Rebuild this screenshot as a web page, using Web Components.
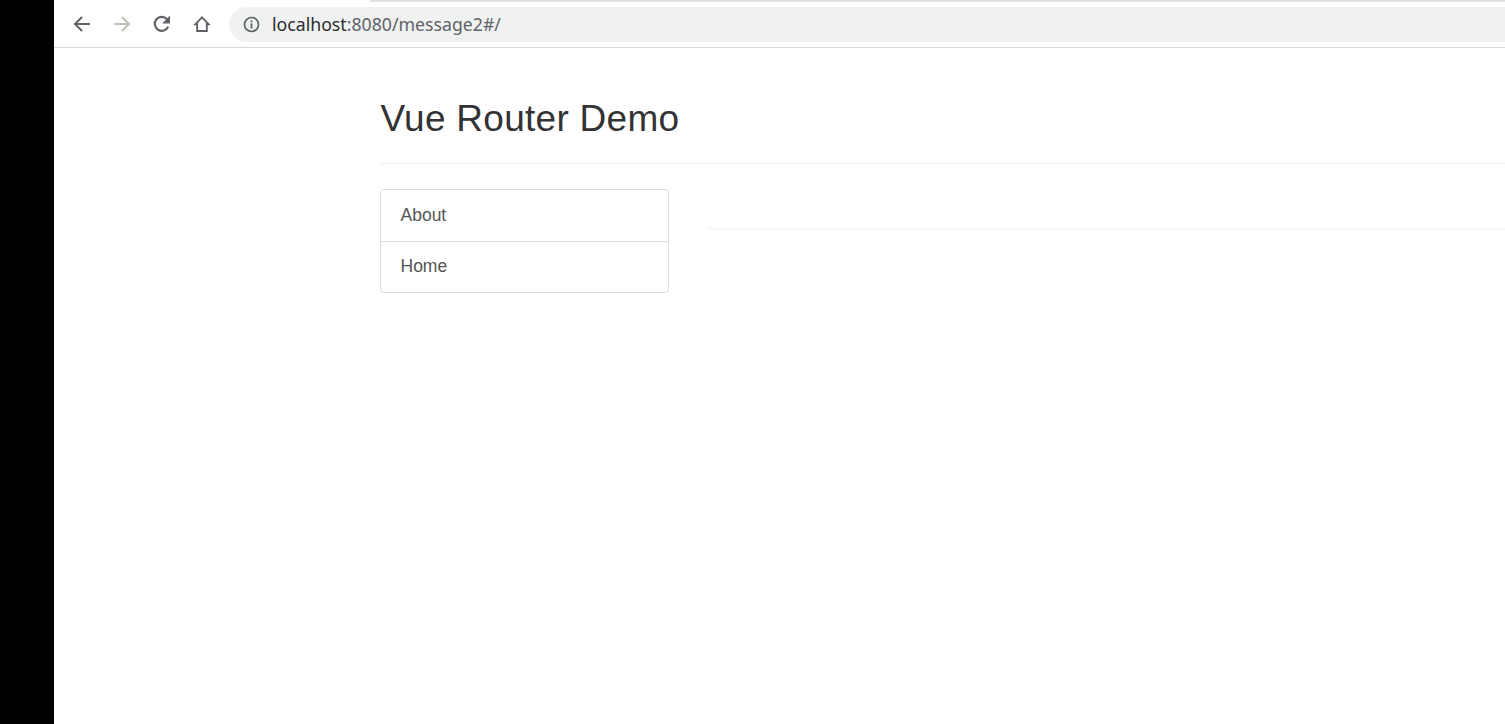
<!DOCTYPE html>
<html>
<head>
<meta charset="utf-8">
<title>Vue Router Demo</title>
<style>
  html, body { margin: 0; height: 100%; background: #000; overflow: hidden; }
  body { display: flex; font-family: "Liberation Sans", Arial, sans-serif; }
</style>
</head>
<body>
<browser-window>
  <browser-toolbar slot="chrome" url-host="localhost" url-rest=":8080/message2#/"></browser-toolbar>
  <demo-page heading="Vue Router Demo">
    <nav-list slot="nav">
      <nav-item>About</nav-item>
      <nav-item>Home</nav-item>
    </nav-list>
    <content-well slot="main"></content-well>
  </demo-page>
</browser-window>

<script>
// browser frame: toolbar on top, page under it, black strip on the left
const _windowTemplate = document.createElement('template');
_windowTemplate.innerHTML = /*html*/ `
<style>
  :host { display: flex; flex-direction: column; flex: 1; min-width: 0; margin-left: 54px; background: #fff; }
  .page { flex: 1; min-height: 0; }
</style>
<slot name="chrome"></slot>
<div class="page"><slot></slot></div>`;

class BrowserWindow extends HTMLElement {
  connectedCallback() {
    const shadowRoot = this.attachShadow({ mode: 'open' });
    shadowRoot.appendChild(_windowTemplate.content.cloneNode(true));
  }
}
customElements.define('browser-window', BrowserWindow);

const _toolbarTemplate = document.createElement('template');
_toolbarTemplate.innerHTML = /*html*/ `
<style>
  :host { display: block; font-family: "Noto Sans", "Liberation Sans", sans-serif; }
  .tabs { height: 2px; background: #dee1e6; }
  .tab { width: 316px; height: 2px; background: #fff; border-radius: 3px 0 6px 0; }
  .bar {
    height: 46px;
    box-sizing: border-box;
    display: flex;
    align-items: center;
    gap: 8px;
    padding: 0 0 1px 11.5px;
    background: #fff;
    border-bottom: 1px solid #d8d8d8;
  }
  button {
    width: 32px;
    height: 32px;
    flex: none;
    padding: 0;
    border: 0;
    background: none;
    display: flex;
    align-items: center;
    justify-content: center;
  }
  svg { display: block; flex: none; }
  .omnibox {
    flex: 1;
    height: 35px;
    margin-left: 3.5px;
    display: flex;
    align-items: center;
    gap: 12px;
    padding-left: 14px;
    border-radius: 18px 0 0 18px;
    background: #f0f2f1;
    font-size: 17.7px;
    color: #5f6368;
    white-space: nowrap;
  }
  .host { color: #2b2c2e; }
</style>
<div class="tabs"><div class="tab"></div></div>
<div class="bar">
  <button aria-label="Back">
    <svg width="20" height="20" viewBox="0 0 20 20" fill="none" stroke="#5f6368" stroke-width="2">
      <path d="M18 10H3M10 3l-7 7 7 7"/>
    </svg>
  </button>
  <button aria-label="Forward">
    <svg width="20" height="20" viewBox="0 0 20 20" fill="none" stroke="#c4bfb9" stroke-width="2">
      <path d="M2 10h15M10 3l7 7-7 7"/>
    </svg>
  </button>
  <button aria-label="Reload">
    <svg width="20" height="20" viewBox="0 0 20 20" fill="none">
      <path d="M16.2 12.6A7 7 0 1 1 15 5.1L17 7" stroke="#5f6368" stroke-width="2.2"/>
      <path d="M18 1.6v7.8h-7.8z" fill="#5f6368"/>
    </svg>
  </button>
  <button aria-label="Home">
    <svg width="20" height="20" viewBox="0 0 20 20" fill="none" stroke="#5f6368" stroke-width="1.9">
      <path d="M10 3.4 3.4 10.2H5.2V17h9.6v-6.8h1.8z"/>
    </svg>
  </button>
  <div class="omnibox">
    <svg width="17" height="17" viewBox="0 0 17 17" fill="none">
      <circle cx="8.5" cy="8.5" r="7" stroke="#5f6368" stroke-width="1.7"/>
      <rect x="7.6" y="7.4" width="1.8" height="5" fill="#5f6368"/>
      <rect x="7.6" y="4.4" width="1.8" height="1.9" fill="#5f6368"/>
    </svg>
    <span><span class="host" id="host"></span><span id="rest"></span></span>
  </div>
</div>`;

class BrowserToolbar extends HTMLElement {
  connectedCallback() {
    const shadowRoot = this.attachShadow({ mode: 'open' });
    shadowRoot.appendChild(_toolbarTemplate.content.cloneNode(true));
    shadowRoot.getElementById('host').textContent = this.getAttribute('url-host');
    shadowRoot.getElementById('rest').textContent = this.getAttribute('url-rest');
  }
}
customElements.define('browser-toolbar', BrowserToolbar);

// bootstrap 3 look: page-header, col-sm-3 nav, col-sm-9 well
const _pageTemplate = document.createElement('template');
_pageTemplate.innerHTML = /*html*/ `
<style>
  :host { display: block; padding-left: 326px; color: #333; font-family: "Liberation Sans", Arial, sans-serif; }
  header { padding-top: 47px; height: 116px; box-sizing: border-box; border-bottom: 1px solid #eee; }
  h1 { margin: 0 0 0 0.5px; font-size: 37px; letter-spacing: 0.27px; font-weight: 400; line-height: 48px; }
  .row { display: flex; padding-top: 25px; }
  .nav { width: 289px; flex: none; }
  .main { flex: 1; min-width: 0; margin-left: 37px; }
</style>
<header><h1 id="title"></h1></header>
<div class="row">
  <div class="nav"><slot name="nav"></slot></div>
  <div class="main"><slot name="main"></slot></div>
</div>`;

class DemoPage extends HTMLElement {
  connectedCallback() {
    const shadowRoot = this.attachShadow({ mode: 'open' });
    shadowRoot.appendChild(_pageTemplate.content.cloneNode(true));
    shadowRoot.getElementById('title').textContent = this.getAttribute('heading');
  }
}
customElements.define('demo-page', DemoPage);

const _listTemplate = document.createElement('template');
_listTemplate.innerHTML = /*html*/ `
<style>
  :host { display: block; border: 1px solid #ddd; border-radius: 4px; background: #fff; }
  ::slotted(nav-item:not(:first-child)) { border-top: 1px solid #ddd; }
</style>
<slot></slot>`;

class NavList extends HTMLElement {
  connectedCallback() {
    const shadowRoot = this.attachShadow({ mode: 'open' });
    shadowRoot.appendChild(_listTemplate.content.cloneNode(true));
  }
}
customElements.define('nav-list', NavList);

const _itemTemplate = document.createElement('template');
_itemTemplate.innerHTML = /*html*/ `
<style>
  :host { display: block; }
  a { display: block; padding: 15px 19.5px 15px; font-size: 17.5px; line-height: 21px; color: #555; text-decoration: none; }
  :host(:not(:first-child)) a { padding-top: 14px; }
</style>
<a href="#"><slot></slot></a>`;

class NavItem extends HTMLElement {
  connectedCallback() {
    const shadowRoot = this.attachShadow({ mode: 'open' });
    shadowRoot.appendChild(_itemTemplate.content.cloneNode(true));
  }
}
customElements.define('nav-item', NavItem);

const _wellTemplate = document.createElement('template');
_wellTemplate.innerHTML = /*html*/ `
<style>
  :host {
    display: block;
    height: 42px;
    box-sizing: border-box;
    border: 1px solid #fcfcfc;
    border-bottom: 3px solid #f9f9f9;
    border-right: 0;
    border-radius: 6px 0 0 6px;
    background: #fff;
  }
</style>`;

class ContentWell extends HTMLElement {
  connectedCallback() {
    const shadowRoot = this.attachShadow({ mode: 'open' });
    shadowRoot.appendChild(_wellTemplate.content.cloneNode(true));
  }
}
customElements.define('content-well', ContentWell);
</script>
</body>
</html>
